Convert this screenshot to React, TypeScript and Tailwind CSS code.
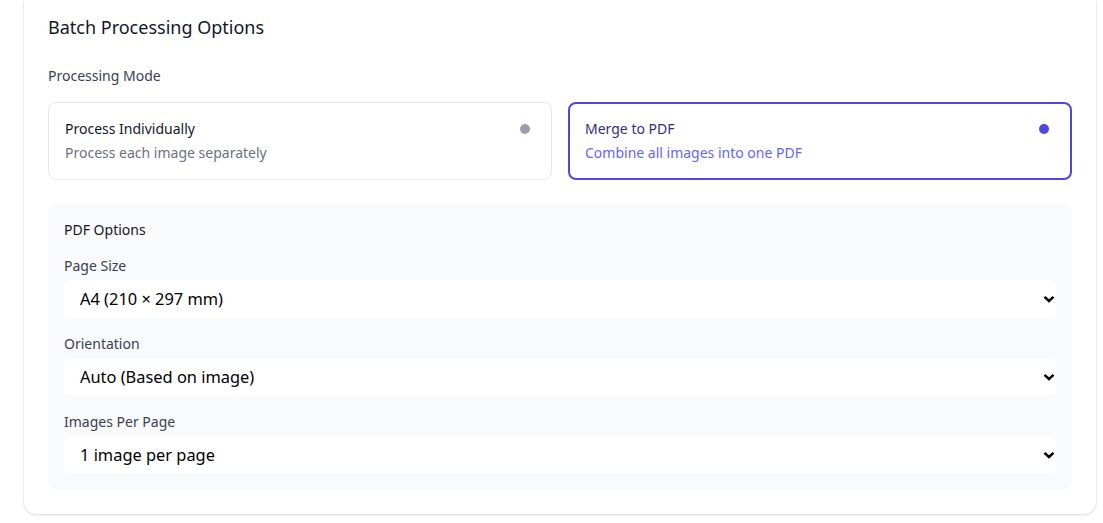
import { useState } from 'react'

const font = { fontFamily: '"Noto Sans", "Liberation Sans", sans-serif' }

function ModeCard({ title, desc, active, onClick }: { title: string; desc: string; active: boolean; onClick: () => void }) {
  return (
    <button
      type="button"
      onClick={onClick}
      className={
        active
          ? 'flex items-start justify-between rounded-lg border-2 border-[#4f46e5] bg-white py-[15px] pl-[15px] pr-4 text-left'
          : 'flex items-start justify-between rounded-lg border border-gray-200 bg-white p-4 text-left'
      }
    >
      <div>
        <div className={active ? 'text-sm leading-5 text-[#312e81]' : 'text-sm leading-5 text-gray-900'}>{title}</div>
        <div className={active ? 'mt-1 text-sm leading-5 text-[#6366f1]' : 'mt-1 text-sm leading-5 text-gray-500'}>{desc}</div>
      </div>
      <div className="flex h-5 w-5 items-center justify-center">
        <span className={active ? 'h-2.5 w-2.5 rounded-full bg-[#4f46e5]' : 'h-2.5 w-2.5 rounded-full bg-gray-400'} />
      </div>
    </button>
  )
}

function Field({ label, value, options, onChange }: { label: string; value: string; options: string[]; onChange: (v: string) => void }) {
  return (
    <div>
      <label className="mb-1 block text-sm leading-5 text-gray-700">{label}</label>
      <div className="relative">
        <select
          value={value}
          onChange={(e) => onChange(e.target.value)}
          className="block h-[38px] w-full appearance-none rounded-md bg-white pl-4 pr-8 text-[16.4px] text-black outline-none"
          style={font}
        >
          {options.map(o => <option key={o} value={o}>{o}</option>)}
        </select>
        <svg className="pointer-events-none absolute right-[1px] top-1/2 h-3 w-3 -translate-y-1/2" viewBox="0 0 12 12" fill="none">
          <path d="M1.5 3.8 L6 8 L10.5 3.8" stroke="#000" strokeWidth="2.4" />
        </svg>
      </div>
    </div>
  )
}

export default function App() {
  const [mode, setMode] = useState<'individual' | 'merge'>('merge')
  const [pageSize, setPageSize] = useState('A4 (210 × 297 mm)')
  const [orientation, setOrientation] = useState('Auto (Based on image)')
  const [perPage, setPerPage] = useState('1 image per page')

  return (
    <div className="min-h-screen bg-white pl-6 pr-[7px]" style={font}>
      <div className="rounded-b-xl bg-white px-6 pb-6 pt-[13px] shadow-[0_1px_3px_rgba(0,0,0,0.12),0_0_0_1px_rgba(0,0,0,0.03)]">
        <h2 className="mb-[25px] text-lg leading-7 text-gray-900">Batch Processing Options</h2>

        <div className="mb-4 text-sm leading-5 text-gray-700">Processing Mode</div>
        <div className="grid grid-cols-2 gap-4">
          <ModeCard title="Process Individually" desc="Process each image separately" active={mode === 'individual'} onClick={() => setMode('individual')} />
          <ModeCard title="Merge to PDF" desc="Combine all images into one PDF" active={mode === 'merge'} onClick={() => setMode('merge')} />
        </div>

        <div className="mt-6 rounded-lg bg-gray-50 p-4">
          <div className="mb-4 text-sm leading-5 text-gray-900">PDF Options</div>
          <div className="flex flex-col gap-4">
            <Field label="Page Size" value={pageSize} onChange={setPageSize} options={['A4 (210 × 297 mm)', 'Letter (8.5 × 11 in)', 'Legal (8.5 × 14 in)']} />
            <Field label="Orientation" value={orientation} onChange={setOrientation} options={['Auto (Based on image)', 'Portrait', 'Landscape']} />
            <Field label="Images Per Page" value={perPage} onChange={setPerPage} options={['1 image per page', '2 images per page', '4 images per page']} />
          </div>
        </div>
      </div>
    </div>
  )
}
